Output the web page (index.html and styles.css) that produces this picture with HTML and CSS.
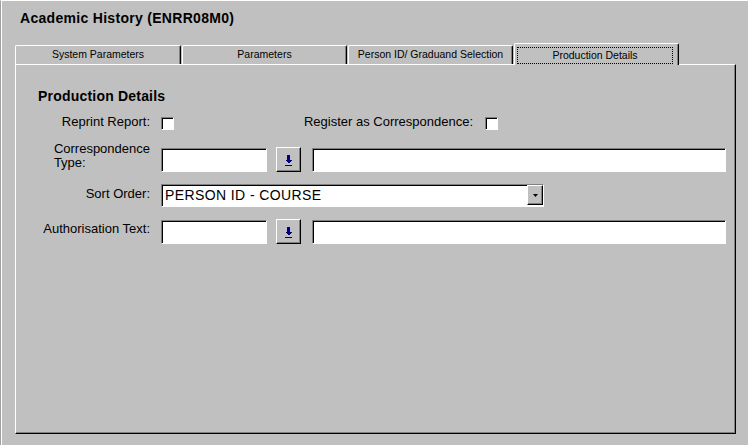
FILE: index.html
```html
<!DOCTYPE html>
<html lang="en">
<head>
  <meta charset="UTF-8" />
  <title>Academic History (ENRR08M0)</title>
  <link rel="stylesheet" href="styles.css">
</head>
<body>
<div class="window">
  <h1 class="title">Academic History (ENRR08M0)</h1>

  <div class="tabs">
    <div class="tab first">System Parameters</div>
    <div class="tab">Parameters</div>
    <div class="tab">Person ID/ Graduand Selection</div>
    <div class="tab active"><span class="focus">Production Details</span></div>
  </div>

  <div class="pane">
    <h2 class="section">Production Details</h2>

    <div class="row row-check">
      <label class="lbl">Reprint Report:</label>
      <span class="check"></span>
      <label class="lbl lbl-wide">Register as Correspondence:</label>
      <span class="check"></span>
    </div>

    <div class="row row-field">
      <label class="lbl lbl-two"><span>Correspondence<br>Type:</span></label>
      <span class="field code"></span>
      <button class="pick" type="button">
        <svg width="7" height="11" viewBox="0 0 7 11" shape-rendering="crispEdges"><rect x="2" y="0" width="3" height="5" fill="#000080"/><polygon points="0,5 7,5 3.5,8.5" fill="#000080"/><rect x="0" y="10" width="7" height="1" fill="#000080"/></svg>
      </button>
      <span class="field desc"></span>
    </div>

    <div class="row row-sort">
      <label class="lbl">Sort Order:</label>
      <div class="combo">
        <span class="combo-text">PERSON ID - COURSE</span>
        <span class="combo-btn">
          <svg width="5" height="3" viewBox="0 0 5 3"><polygon points="0,0 5,0 2.5,3" fill="#000"/></svg>
        </span>
      </div>
    </div>

    <div class="row row-auth">
      <label class="lbl">Authorisation Text:</label>
      <span class="field code"></span>
      <button class="pick" type="button">
        <svg width="7" height="11" viewBox="0 0 7 11" shape-rendering="crispEdges"><rect x="2" y="0" width="3" height="5" fill="#000080"/><polygon points="0,5 7,5 3.5,8.5" fill="#000080"/><rect x="0" y="10" width="7" height="1" fill="#000080"/></svg>
      </button>
      <span class="field desc"></span>
    </div>
  </div>
</div>
</body>
</html>
```

FILE: styles.css
```css
/* Base */
* {
  box-sizing: border-box;
}

body {
  margin: 0;
  background: #c0c0c0;
  font-family: "Liberation Sans", Arial, sans-serif;
  color: #000;
  overflow: hidden;
}

/* Window frame */
.window {
  height: 445px;
  border-top: 1px solid #fff;
  border-left: 1px solid #a0a0a0;
  box-shadow: inset 1px 0 #fff;
}

.title {
  margin: 9px 0 0 19px;
  font-size: 14px;
  line-height: 16px;
  font-weight: bold;
  letter-spacing: 0.3px;
}

/* Tabs */
.tabs {
  display: flex;
  align-items: flex-end;
  gap: 1px;
  margin: 17px 0 0 14px;
}

.tab {
  width: 165px;
  height: 19px;
  border: 1px solid #fff;
  border-right-color: #000;
  border-bottom: none;
  border-radius: 2px 2px 0 0;
  box-shadow: inset -1px 0 #808080;
  font-size: 10.5px;
  line-height: 17px;
  text-align: center;
  white-space: nowrap;
  flex: none;
}
.tab.first {
  width: 166px;
}
.tab.active {
  height: 22px;
  margin-bottom: -1px;
  padding: 3px 5px 0 2px;
  position: relative;
  z-index: 1;
  background: #c0c0c0;
}

.focus {
  display: block;
  border: 1px dotted #000;
  line-height: 15px;
}

/* Tab page */
.pane {
  margin-left: 14px;
  width: 721px;
  height: 370px;
  border-top: 1px solid #fff;
  border-left: 1px solid #fff;
  border-right: 1px solid #000;
  border-bottom: 1px solid #000;
  box-shadow: inset -1px -1px #808080;
  padding-top: 23px;
}

.section {
  margin: 0 0 0 22px;
  font-size: 14px;
  line-height: 16px;
  font-weight: bold;
  letter-spacing: 0.2px;
}

/* Form rows */
.row {
  display: flex;
  align-items: flex-start;
}
.row-check { margin-top: 10px; }
.row-field { margin-top: 17px; }
.row-sort { margin-top: 12px; }
.row-auth { margin-top: 12px; }

.lbl {
  flex: none;
  width: 134px;
  margin-right: 11px;
  text-align: right;
  font-size: 13px;
  line-height: 15px;
  white-space: nowrap;
}
.lbl-wide {
  width: 299px;
  margin-right: 12px;
}
.lbl-two {
  margin-top: -5px;
  line-height: 14px;
}
.lbl-two span {
  display: inline-block;
  text-align: left;
}
.row-sort .lbl,
.row-auth .lbl {
  margin-top: 2px;
}

.check {
  flex: none;
  width: 13px;
  height: 13px;
  margin-top: 3px;
  background: #fff;
  border: 1px solid;
  border-color: #808080 #fff #fff #808080;
  box-shadow: inset 1px 1px #000;
}

.field {
  flex: none;
  height: 24px;
  margin-top: 1px;
  background: #fff;
  border: 1px solid;
  border-color: #808080 #fff #fff #808080;
  box-shadow: inset 1px 1px #000;
}
.field.code { width: 106px; }
.field.desc {
  width: 414px;
  margin-left: 11px;
}

.pick {
  flex: none;
  width: 25px;
  height: 25px;
  margin: 0 0 0 9px;
  padding: 0;
  display: flex;
  align-items: center;
  justify-content: center;
  background: #c0c0c0;
  border: 1px solid;
  border-color: #fff #000 #000 #fff;
  box-shadow: inset -1px -1px #808080;
}
.pick svg {
  display: block;
  margin-top: 1px;
}

/* Combo box */
.combo {
  flex: none;
  width: 383px;
  height: 23px;
  display: flex;
  background: #fff;
  border: 1px solid;
  border-color: #808080 #fff #fff #808080;
  box-shadow: inset 1px 1px #000;
}
.combo-text {
  flex: 1;
  padding: 1px 0 0 3px;
  font-size: 14px;
  line-height: 19px;
  letter-spacing: 0.4px;
  white-space: nowrap;
}
.combo-btn {
  flex: none;
  width: 16px;
  height: 20px;
  display: flex;
  align-items: center;
  justify-content: center;
  background: #c0c0c0;
  border: 1px solid;
  border-color: #fff #000 #000 #fff;
  box-shadow: inset -1px -1px #808080;
}
.combo-btn svg {
  display: block;
}
```
